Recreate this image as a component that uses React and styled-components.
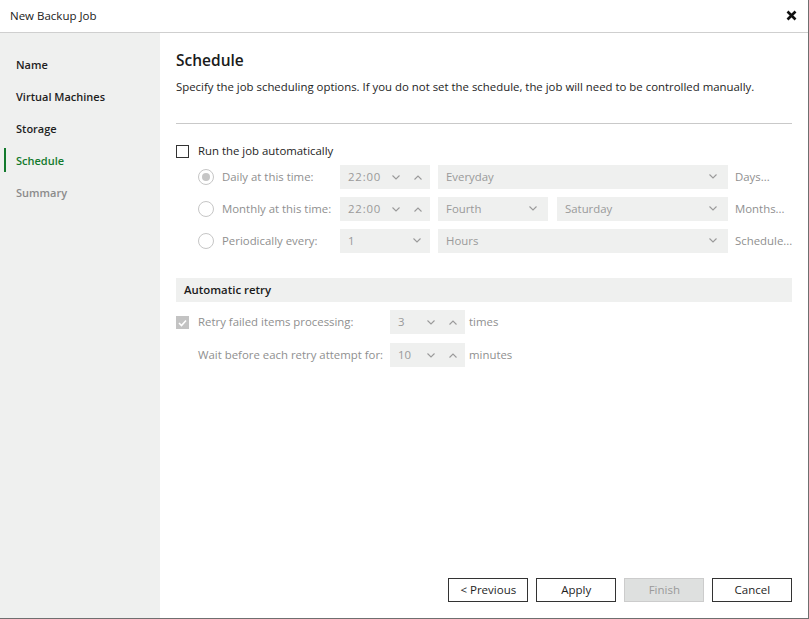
import React from 'react';
import styled, { createGlobalStyle } from 'styled-components';

const GlobalStyle = createGlobalStyle`
  html, body {
    margin: 0;
    padding: 0;
    background: #ffffff;
  }
  body {
    font-family: 'Open Sans', 'Noto Sans', sans-serif;
    font-size: 11.4px;
    color: #1e1e1e;
  }
`;

const Window = styled.div`
  width: 808px;
  height: 618px;
  border-right: 1px solid #6f6f6f;
  border-bottom: 1px solid #6f6f6f;
  display: flex;
  flex-direction: column;
  background: #ffffff;
`;

const TitleBar = styled.div`
  height: 33px;
  flex: none;
  display: flex;
  align-items: center;
  justify-content: space-between;
  padding: 0 10px 1px;
  box-sizing: border-box;
  border-bottom: 1px solid #cfcfcf;
  font-size: 11.5px;
  color: #1a1a1a;
`;

const CloseButton = styled.button`
  border: none;
  background: none;
  padding: 0;
  margin-right: 1px;
  width: 12px;
  height: 12px;
  display: flex;
  align-items: center;
  justify-content: center;
  cursor: pointer;
`;

const Body = styled.div`
  flex: 1;
  display: flex;
  min-height: 0;
`;

const Sidebar = styled.nav`
  width: 160px;
  flex: none;
  background: #eff0ef;
  padding-top: 21px;
  display: flex;
  flex-direction: column;
`;

const NavItem = styled.div`
  position: relative;
  height: 32px;
  line-height: 22px;
  padding: 0 16px;
  font-size: 11px;
  font-weight: 600;
  color: ${p => (p.active ? '#137a2d' : p.muted ? '#8b8b8b' : '#1e1e1e')};

  &:before {
    content: '';
    display: ${p => (p.active ? 'block' : 'none')};
    position: absolute;
    left: 4px;
    top: -2px;
    width: 2px;
    height: 24px;
    background: #137a2d;
  }
`;

const Main = styled.main`
  flex: 1;
  display: flex;
  flex-direction: column;
  padding: 17px 16px 16px 16px;
`;

const Heading = styled.h2`
  margin: 0 0 8px;
  font-size: 15.5px;
  line-height: 21px;
  font-weight: 600;
  color: #1a1a1a;
`;

const Description = styled.p`
  margin: 0;
  line-height: 16px;
  color: #1e1e1e;
`;

const Divider = styled.div`
  margin: 28px 0 15px;
  height: 1px;
  background: #c9c9c9;
`;

const Row = styled.div`
  display: flex;
  align-items: center;
  height: 24px;
  gap: ${p => p.gap || 0}px;
  margin-left: ${p => p.indent || 0}px;
  margin-top: ${p => p.top || 0}px;
`;

const CheckBox = styled.span`
  width: 13px;
  height: 13px;
  flex: none;
  box-sizing: border-box;
  border: 1px solid ${p => (p.checked ? '#c3c3c3' : '#333333')};
  background: ${p => (p.checked ? '#c3c3c3' : '#ffffff')};
  display: flex;
  align-items: center;
  justify-content: center;
  margin-top: 1px;
`;

const Label = styled.span`
  color: ${p => (p.disabled ? '#8f8f8f' : '#1e1e1e')};
  width: ${p => (p.width ? `${p.width}px` : 'auto')};
  padding-left: ${p => p.pad || 0}px;
  box-sizing: border-box;
  flex: none;
  white-space: nowrap;
  padding-bottom: 1px;
`;

const Radio = styled.span`
  width: 16px;
  height: 16px;
  flex: none;
  box-sizing: border-box;
  border-radius: 50%;
  border: 1px solid #c6c6c6;
  background: #ffffff;
  display: flex;
  align-items: center;
  justify-content: center;

  &:after {
    content: '';
    display: ${p => (p.checked ? 'block' : 'none')};
    width: 8px;
    height: 8px;
    border-radius: 50%;
    background: #c6c6c6;
  }
`;

const Field = styled.div`
  width: ${p => p.width}px;
  height: 24px;
  flex: none;
  box-sizing: border-box;
  background: #eff0ef;
  display: flex;
  align-items: center;
  padding: 0 ${p => p.padRight ?? 8}px 1px 8px;
  color: #9a9a9a;
`;

const FieldValue = styled.span`
  flex: 1;
  letter-spacing: ${p => (p.spaced ? '0.8px' : '0')};
  white-space: nowrap;
`;

const Arrows = styled.span`
  display: flex;
  align-items: center;
  gap: 14px;
  padding-top: 1px;
`;

const LinkText = styled.span`
  color: #8f8f8f;
  white-space: nowrap;
  margin-left: ${p => p.gap || 0}px;
  padding-bottom: 1px;
`;

const SectionBar = styled.div`
  margin-top: 25px;
  height: 24px;
  display: flex;
  align-items: center;
  padding: 0 8px 1px;
  box-sizing: border-box;
  background: #eff0ef;
  font-weight: 600;
  color: #1a1a1a;
`;

const Footer = styled.div`
  margin-top: auto;
  display: flex;
  justify-content: flex-end;
  gap: 8px;
`;

const Button = styled.button`
  width: 80px;
  height: 24px;
  box-sizing: border-box;
  border: 1px solid ${p => (p.disabled ? '#cccccc' : '#333333')};
  background: ${p => (p.disabled ? '#dee0df' : '#ffffff')};
  color: ${p => (p.disabled ? '#9a9a9a' : '#1e1e1e')};
  font-family: inherit;
  font-size: 11.5px;
  padding: 0 0 2px;
`;

const Chevron = ({ up }) => (
  <svg width="8" height="5" viewBox="0 0 8 5" fill="none">
    <path
      d={up ? 'M0.5 4.5 L4 1 L7.5 4.5' : 'M0.5 0.5 L4 4 L7.5 0.5'}
      stroke="#9a9a9a"
      strokeWidth="1.1"
    />
  </svg>
);

const Spin = () => (
  <Arrows>
    <Chevron />
    <Chevron up />
  </Arrows>
);

const Select = ({ width, value }) => (
  <Field width={width} padRight={11}>
    <FieldValue>{value}</FieldValue>
    <Chevron />
  </Field>
);

const TimeBox = ({ value, width = 90, spin = true, spaced }) => (
  <Field width={width} padRight={spin ? 8 : 9}>
    <FieldValue spaced={spaced}>{value}</FieldValue>
    {spin ? <Spin /> : <Chevron />}
  </Field>
);

const steps = [
  { name: 'Name' },
  { name: 'Virtual Machines' },
  { name: 'Storage' },
  { name: 'Schedule', active: true },
  { name: 'Summary', muted: true },
];

export default function App() {
  return (
    <>
      <GlobalStyle />
      <Window>
        <TitleBar>
          <span>New Backup Job</span>
          <CloseButton aria-label="Close">
            <svg width="11" height="11" viewBox="0 0 11 11">
              <path d="M1.5 1.5 L9.5 9.5 M9.5 1.5 L1.5 9.5" stroke="#111" strokeWidth="2.6" />
            </svg>
          </CloseButton>
        </TitleBar>
        <Body>
          <Sidebar>
            {steps.map(s => (
              <NavItem key={s.name} active={s.active} muted={s.muted}>
                {s.name}
              </NavItem>
            ))}
          </Sidebar>
          <Main>
            <Heading>Schedule</Heading>
            <Description>
              Specify the job scheduling options. If you do not set the schedule, the job will need to be controlled manually.
            </Description>
            <Divider />

            <Row gap={9}>
              <CheckBox />
              <Label>Run the job automatically</Label>
            </Row>

            <Row indent={22} top={2}>
              <Radio checked />
              <Label disabled width={126} pad={8}>Daily at this time:</Label>
              <TimeBox value="22:00" spaced />
              <Row indent={8}>
                <Select width={290} value="Everyday" />
                <LinkText gap={7}>Days...</LinkText>
              </Row>
            </Row>

            <Row indent={22} top={8}>
              <Radio />
              <Label disabled width={126} pad={8}>Monthly at this time:</Label>
              <TimeBox value="22:00" spaced />
              <Row gap={9} indent={8}>
                <Select width={110} value="Fourth" />
                <Select width={171} value="Saturday" />
              </Row>
              <LinkText gap={7}>Months...</LinkText>
            </Row>

            <Row indent={22} top={8}>
              <Radio />
              <Label disabled width={126} pad={8}>Periodically every:</Label>
              <TimeBox value="1" spin={false} />
              <Row indent={8}>
                <Select width={290} value="Hours" />
                <LinkText gap={7}>Schedule...</LinkText>
              </Row>
            </Row>

            <SectionBar>Automatic retry</SectionBar>

            <Row top={8}>
              <CheckBox checked>
                <svg width="9" height="8" viewBox="0 0 9 8">
                  <path d="M1 4 L3.5 6.5 L8 1.5" stroke="#fff" strokeWidth="1.6" fill="none" />
                </svg>
              </CheckBox>
              <Label disabled width={201} pad={9}>Retry failed items processing:</Label>
              <TimeBox value="3" width={75} />
              <LinkText gap={4}>times</LinkText>
            </Row>

            <Row top={9}>
              <Label disabled width={214} pad={22}>Wait before each retry attempt for:</Label>
              <TimeBox value="10" width={75} />
              <LinkText gap={4}>minutes</LinkText>
            </Row>

            <Footer>
              <Button>&lt; Previous</Button>
              <Button>Apply</Button>
              <Button disabled>Finish</Button>
              <Button>Cancel</Button>
            </Footer>
          </Main>
        </Body>
      </Window>
    </>
  );
}
